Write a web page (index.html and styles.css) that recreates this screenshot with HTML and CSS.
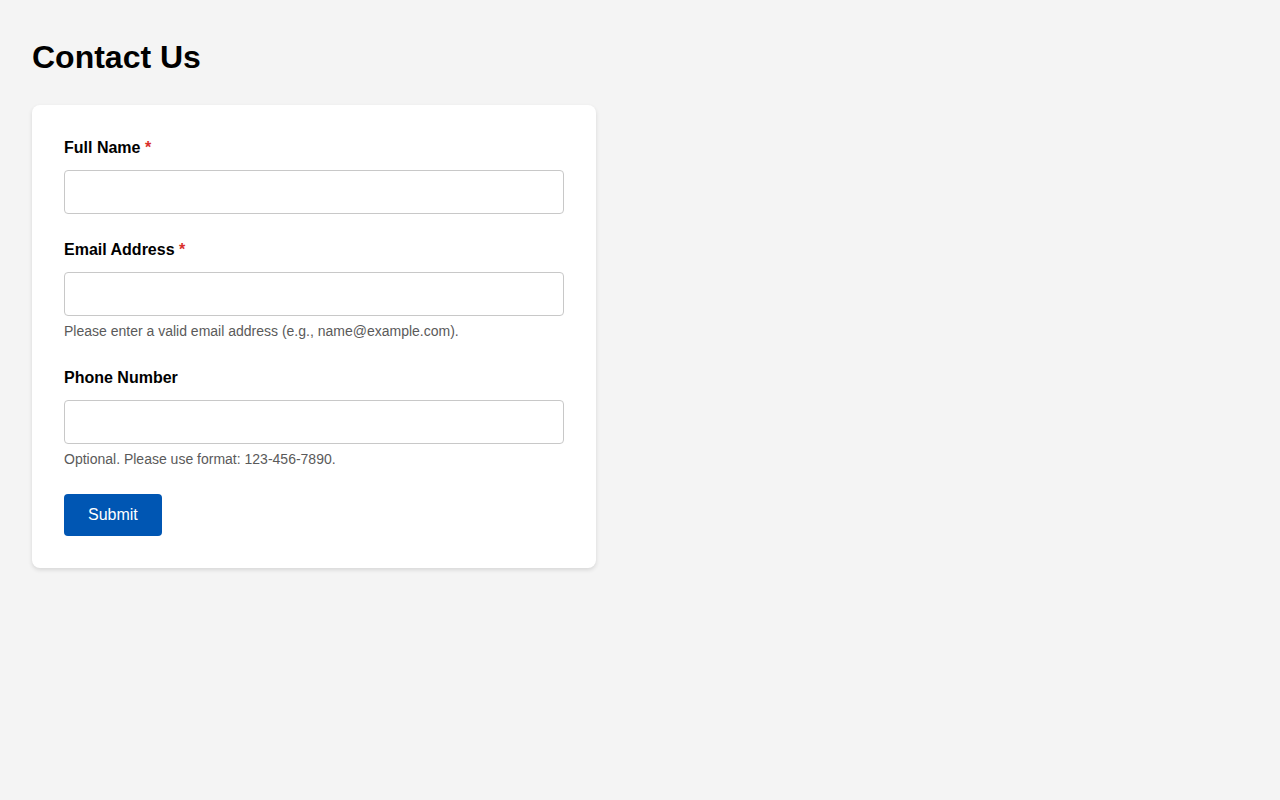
FILE: index.html
```html
<!DOCTYPE html>
<html lang="en">
<head>
    <meta charset="UTF-8">
    <meta name="viewport" content="width=device-width, initial-scale=1.0">
    <title>Contact Us</title>
    <link rel="stylesheet" href="styles.css">
</head>
<body>
    <h1 class="page-title">Contact Us</h1>

    <form class="contact-card" onsubmit="return false;">
        <div class="form-group">
            <label class="form-label" for="fullName">Full Name <span class="required">*</span></label>
            <input type="text" class="form-input" id="fullName">
        </div>

        <div class="form-group">
            <label class="form-label" for="email">Email Address <span class="required">*</span></label>
            <input type="email" class="form-input" id="email">
            <p class="form-help">Please enter a valid email address (e.g., name@example.com).</p>
        </div>

        <div class="form-group">
            <label class="form-label" for="phone">Phone Number</label>
            <input type="tel" class="form-input" id="phone">
            <p class="form-help">Optional. Please use format: 123-456-7890.</p>
        </div>

        <button type="submit" class="submit-button">Submit</button>
    </form>
</body>
</html>
```

FILE: styles.css
```css
* {
    margin: 0;
    padding: 0;
    box-sizing: border-box;
}

body {
    font-family: 'Liberation Sans', Arial, sans-serif;
    background: #f4f4f4;
    color: #000;
    padding: 37px 32px;
}

.page-title {
    font-size: 32px;
    line-height: 40px;
    font-weight: bold;
    margin-bottom: 28px;
}

.contact-card {
    width: 564px;
    background: #ffffff;
    border-radius: 8px;
    padding: 31px 32px 32px;
    box-shadow: 0 2px 4px rgba(0,0,0,0.12);
}

.form-group {
    margin-bottom: 24px;
}

.form-label {
    display: block;
    font-size: 16px;
    line-height: 24px;
    font-weight: bold;
    margin-bottom: 10px;
}

.required {
    color: #d9302c;
}

.form-input {
    display: block;
    width: 100%;
    height: 44px;
    padding: 10px 12px;
    border: 1px solid #c8c8c8;
    border-radius: 4px;
    font-family: inherit;
    font-size: 16px;
    outline: none;
    background: #fff;
}

.form-input:focus {
    border-color: #0056b3;
}

.form-help {
    margin-top: 5px;
    font-size: 14px;
    line-height: 21px;
    color: #5a5a5a;
}

.submit-button {
    background: #0056b3;
    color: white;
    border: none;
    padding: 12px 24px;
    border-radius: 4px;
    font-family: inherit;
    font-size: 16px;
    line-height: 18px;
    cursor: pointer;
}

.submit-button:hover {
    background: #004494;
}
```
